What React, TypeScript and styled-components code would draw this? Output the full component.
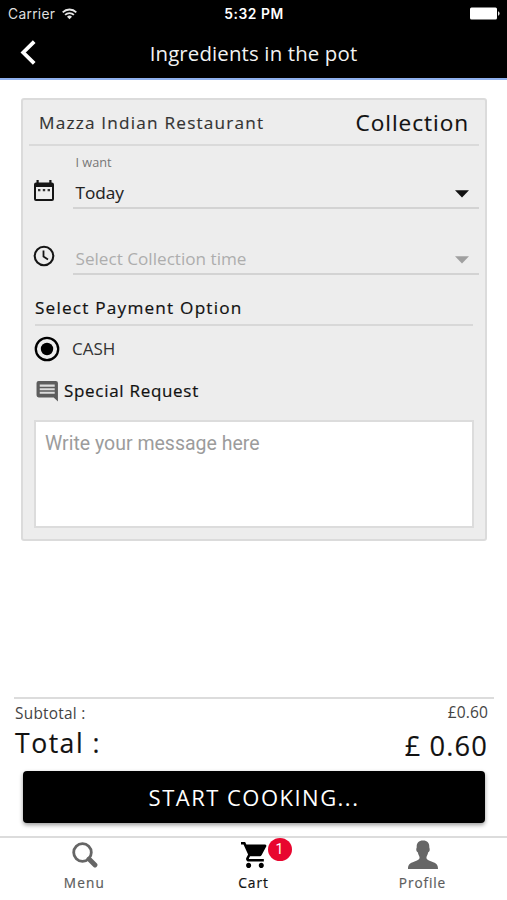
import React from "react";
import styled, { createGlobalStyle } from "styled-components";

const GlobalStyle = createGlobalStyle`
  * { box-sizing: border-box; }
  body { margin: 0; background: #fff; font-family: "Open Sans", "Noto Sans", sans-serif; }
`;

const Screen = styled.div`
  width: 507px;
  height: 900px;
  display: flex;
  flex-direction: column;
  overflow: hidden;
  background: #fff;
  color: #111;
`;

const StatusBar = styled.div`
  height: 27px;
  flex: none;
  display: grid;
  grid-template-columns: 1fr auto 1fr;
  align-items: center;
  padding: 0 7px 0 8px;
  background: #000;
  color: #fff;
  font-family: Inter, "Liberation Sans", sans-serif;
`;

const Carrier = styled.div`
  display: flex;
  align-items: center;
  gap: 7px;
  color: #dedede;
`;

const Battery = styled.svg`
  display: block;
  justify-self: end;
`;

const Header = styled.header`
  height: 53px;
  flex: none;
  display: grid;
  grid-template-columns: 60px 1fr 60px;
  align-items: center;
  border-bottom: 2px solid #8fb0ee;
  background: #000;
`;

const BackButton = styled.button`
  display: flex;
  padding: 0 0 1px 20px;
  border: 0;
  background: none;
`;

const Label = styled.span<{
  $size: number;
  $space?: number;
  $weight?: number;
  $color?: string;
  $thicken?: number;
}>`
  display: block;
  white-space: nowrap;
  font-size: ${(p) => p.$size}px;
  letter-spacing: ${(p) => p.$space ?? 0}px;
  font-weight: ${(p) => p.$weight ?? 400};
  color: ${(p) => p.$color ?? "inherit"};
  -webkit-text-stroke: ${(p) => p.$thicken ?? 0}px currentColor;
`;

const Title = styled(Label)`
  text-align: center;
`;

const Card = styled.section`
  width: 466px;
  height: 443px;
  flex: none;
  margin: 18px 0 0 21px;
  padding: 0 6px;
  border: 2px solid #dbdbdb;
  border-radius: 3px;
  background: #ededed;
`;

const CardHead = styled.div`
  height: 46px;
  display: flex;
  justify-content: space-between;
  align-items: center;
  padding: 0 10px 0 10px;
  border-bottom: 2px solid #dadada;
`;

const Field = styled.div<{ $height: number }>`
  height: ${(p) => p.$height}px;
  display: grid;
  grid-template-columns: 44px 1fr;
  align-items: end;
`;

const FieldIcon = styled.svg<{ $lift: number }>`
  display: block;
  margin: 0 0 ${(p) => p.$lift}px 4px;
`;

const FieldBody = styled.div`
  border-bottom: 2px solid #d3d3d3;
  padding-left: 2.5px;
`;

const Hint = styled(Label)`
  line-height: 18px;
  padding-bottom: 7px;
`;

const Select = styled.div`
  height: 29px;
  display: flex;
  align-items: center;
  justify-content: space-between;
  padding: 0 10px 1px 0;
  svg { margin-top: 3px; }
`;

const Section = styled.div`
  height: 51px;
  margin: 0 6px 0 6px;
  display: flex;
  align-items: flex-end;
  border-bottom: 2px solid #d8d8d8;
`;

const SectionTitle = styled(Label)`
  line-height: 24px;
  padding-bottom: 4px;
`;

const RadioRow = styled.label`
  height: 45px;
  display: flex;
  align-items: center;
  gap: 12px;
  padding-left: 5px;
`;

const RequestRow = styled.div`
  height: 38px;
  display: flex;
  align-items: center;
  gap: 5px;
  padding-left: 7px;
  svg { margin-top: 2px; }
`;

const Message = styled.textarea`
  display: block;
  width: 440px;
  height: 108px;
  margin: 11px 0 0 5px;
  padding: 9px 9px;
  resize: none;
  outline: none;
  border: 2px solid #dcdcdc;
  background: #fff;
  font: 19.5px/25px Roboto, sans-serif;
  &::placeholder { color: #9c9c9c; opacity: 1; }
`;

const Summary = styled.div`
  height: 74px;
  flex: none;
  margin: auto 13px 0 14px;
  padding: 0 6px 0 1px;
  border-top: 2px solid #dcdcdc;
  display: flex;
  justify-content: space-between;
`;

const Amounts = styled.div<{ $top: number; $gap: number; $right?: boolean }>`
  display: flex;
  flex-direction: column;
  align-items: ${(p) => (p.$right ? "flex-end" : "flex-start")};
  gap: ${(p) => p.$gap}px;
  padding-top: ${(p) => p.$top}px;
  ${Label} { line-height: 22px; }
`;

const StartButton = styled.button`
  height: 52px;
  flex: none;
  margin: 0 22px 13px 23px;
  padding: 0 0 1px;
  display: flex;
  align-items: center;
  justify-content: center;
  border: 0;
  border-radius: 4px;
  background: #000;
  color: #fff;
  font-family: inherit;
  box-shadow: 0 2px 4px rgba(0, 0, 0, 0.4);
`;

const TabBar = styled.nav`
  height: 64px;
  flex: none;
  display: grid;
  grid-template-columns: repeat(3, 1fr);
  border-top: 2px solid #dcdcdc;
`;

const Tab = styled.div`
  display: flex;
  flex-direction: column;
  align-items: center;
`;

const TabIcon = styled.div`
  position: relative;
  height: 35px;
  display: flex;
  align-items: center;
  padding-bottom: 1px;
  svg { display: block; }
`;

const TabLabel = styled(Label)`
  line-height: 20px;
`;

const Badge = styled.span`
  position: absolute;
  left: 27px;
  top: 0;
  width: 24px;
  height: 23px;
  border-radius: 50%;
  background: #e8062f;
  color: #fff;
  font: 14px/23px Roboto, sans-serif;
  text-align: center;
`;

const Caret = ({ color }: { color: string }) => (
  <svg width="14" height="8" viewBox="0 0 14 8">
    <path d="M0 0.3h14L7 7.6z" fill={color} />
  </svg>
);

export default function App() {
  return (
    <>
      <GlobalStyle />
      <Screen>
        <StatusBar>
          <Carrier>
            <Label $size={13.8} $space={0.3}>Carrier</Label>
            <svg width="15" height="12" viewBox="0 0 15 12" fill="none" stroke="#e6e6e6" strokeWidth="1.8">
              <path d="M0.7 4.3a9.6 9.6 0 0 1 13.6 0" />
              <path d="M3.1 6.9a6.2 6.2 0 0 1 8.8 0" />
              <path d="M7.5 11.3L5 8.8a3.5 3.5 0 0 1 5 0z" fill="#e6e6e6" stroke="none" />
            </svg>
          </Carrier>
          <Label $size={13.8} $weight={600} $space={0.55}>5:32 PM</Label>
          <Battery width="31" height="13" viewBox="0 0 31 13">
            <rect x="1" y="0.5" width="27" height="12" rx="1.5" fill="#fff" />
            <path d="M29 4.3q1.6 .5 1.6 2.2t-1.6 2.2z" fill="#ddd" />
          </Battery>
        </StatusBar>
        <Header>
          <BackButton aria-label="Back">
            <svg width="17" height="25" viewBox="0 0 17 25" fill="none" stroke="#fff" strokeWidth="3.8">
              <path d="M14.2 1.6L3.2 12.5l11 10.9" />
            </svg>
          </BackButton>
          <Title $size={20.4} $color="#f2f2f2" $space={0.15}>Ingredients in the pot</Title>
        </Header>

        <Card>
          <CardHead>
            <Label $size={17.2} $space={1.2} $color="#333" $thicken={0.15}>Mazza Indian Restaurant</Label>
            <Label $size={22.6} $space={0.95} $thicken={0.15}>Collection</Label>
          </CardHead>
          <Field $height={63}>
            <FieldIcon $lift={6} width="22" height="24" viewBox="0 0 22 24">
              <path fill="#151515" fillRule="evenodd" d="M3.5 1h2.2v2.5h10.6V1h2.2v2.5h.2Q21 3.5 21 5.5V20q0 2-2 2H3q-2 0-2-2V5.5q0-2 2-2h.5zM3 8v12h16V8z" />
              <path fill="#333" d="M5 10h2.4v2.2H5zm4.8 0h2.4v2.2H9.8zm4.8 0H17v2.2h-2.4z" />
            </FieldIcon>
            <FieldBody>
              <Hint $size={12.7} $color="#777">I want</Hint>
              <Select>
                <Label $size={17.2} $color="#222" $thicken={0.1}>Today</Label>
                <Caret color="#111" />
              </Select>
            </FieldBody>
          </Field>
          <Field $height={66}>
            <FieldIcon $lift={8} width="22" height="22" viewBox="0 0 22 22" fill="none" stroke="#151515" strokeWidth="2.1">
              <circle cx="11" cy="11" r="9.3" />
              <path d="M10.5 5.5v6l4.5 2.9" strokeWidth="1.8" />
            </FieldIcon>
            <FieldBody>
              <Select>
                <Label $size={17.15} $color="#adadad">Select Collection time</Label>
                <Caret color="#a0a0a0" />
              </Select>
            </FieldBody>
          </Field>
          <Section>
            <SectionTitle $size={17.2} $space={1.2} $thicken={0.2}>Select Payment Option</SectionTitle>
          </Section>
          <RadioRow>
            <svg width="26" height="26" viewBox="0 0 26 26">
              <circle cx="13" cy="13" r="11.2" fill="none" stroke="#000" strokeWidth="2.3" />
              <circle cx="13" cy="13" r="6.2" fill="#000" />
            </svg>
            <Label $size={17} $color="#333">CASH</Label>
          </RadioRow>
          <RequestRow>
            <svg width="23" height="22" viewBox="1.5 0 21.5 21.5" preserveAspectRatio="none">
              <path d="M4 1h16q2 0 2 2v18l-4-4H4q-2 0-2-2V3q0-2 2-2z" fill="#5d5d5d" />
              <path d="M5 4.5h14v2H5zM5 8h14v2H5zM5 11.500h14v2H5z" fill="#dcdcdc" />
            </svg>
            <Label $size={17} $space={0.7} $thicken={0.2}>Special Request</Label>
          </RequestRow>
          <Message placeholder="Write your message here" />
        </Card>

        <Summary>
          <Amounts $top={4} $gap={7}>
            <Label $size={15.4} $space={0.25} $color="#444">Subtotal :</Label>
            <Label $size={26.6} $space={1.5} $thicken={0.15}>Total :</Label>
          </Amounts>
          <Amounts $top={1.5} $gap={12.5} $right>
            <Label $size={15.6} $space={0.1} $color="#444">£0.60</Label>
            <Label $size={27.3} $space={1.1} $thicken={0.15}>£ 0.60</Label>
          </Amounts>
        </Summary>
        <StartButton>
          <Label $size={22} $space={1.48}>START COOKING...</Label>
        </StartButton>

        <TabBar>
          <Tab>
            <TabIcon>
              <svg width="26" height="26" viewBox="0 0 26 26" fill="none" stroke="#666">
                <circle cx="10.5" cy="10.5" r="8.8" strokeWidth="2.8" />
                <path d="M17 17l6 6" strokeWidth="4.8" strokeLinecap="round" />
              </svg>
            </TabIcon>
            <TabLabel $size={13.6} $space={1.2} $thicken={0.2} $color="#5c5c5c">Menu</TabLabel>
          </Tab>
          <Tab>
            <TabIcon>
              <svg width="26" height="26" viewBox="1 2 20.5 20" preserveAspectRatio="none" fill="#000">
                <path d="M7 18c-1.1 0-1.99.9-1.99 2S5.9 22 7 22s2-.9 2-2-.9-2-2-2zM1 2v2h2l3.6 7.59-1.35 2.45c-.16.28-.25.61-.25.96 0 1.1.9 2 2 2h12v-2H7.42c-.14 0-.25-.11-.25-.25l.03-.12.9-1.63h7.45c.75 0 1.41-.41 1.75-1.03l3.58-6.49A1.003 1.003 0 0 0 20 4H5.21l-.94-2H1zm16 16c-1.1 0-1.99.9-1.99 2s.89 2 1.99 2 2-.9 2-2-.9-2-2-2z" />
              </svg>
              <Badge>1</Badge>
            </TabIcon>
            <TabLabel $size={13.8} $space={0.95} $thicken={0.2}>Cart</TabLabel>
          </Tab>
          <Tab>
            <TabIcon>
              <svg width="32" height="30" viewBox="0 0 32 30" fill="#666">
                <path d="M16 0.5c4.4 0 6.4 2.600 6.300 6.500-.1 1.300.6 1.300.4 3-.2 1.400-.9 1.900-1.500 2.300-.4 2.300-1.300 3.700-1.700 4.700-.3 2.500 1 3 5 4.400 5 1.800 6.500 3.100 6.500 7.600H1c0-4.500 1.500-5.800 6.500-7.600 4-1.400 5.300-1.900 5-4.400-.4-1-1.300-2.400-1.700-4.700-.6-.4-1.300-.9-1.500-2.300-.2-1.700.5-1.700.4-3C9.600 3.100 11.600.5 16 .5z" />
              </svg>
            </TabIcon>
            <TabLabel $size={13.6} $space={0.9} $thicken={0.2} $color="#5c5c5c">Profile</TabLabel>
          </Tab>
        </TabBar>
      </Screen>
    </>
  );
}
